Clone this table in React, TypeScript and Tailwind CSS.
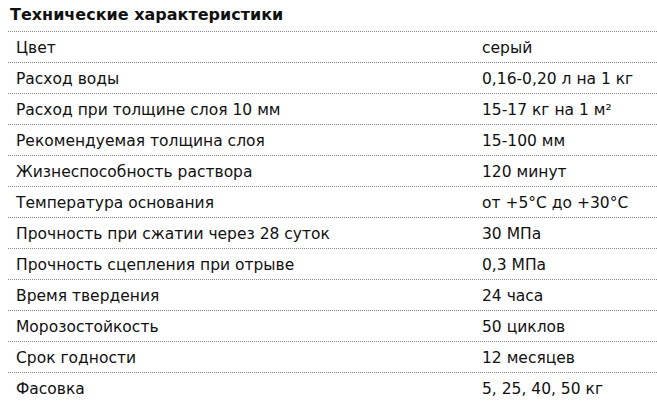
const rows: [string, string][] = [
  ["Цвет", "серый"],
  ["Расход воды", "0,16-0,20 л на 1 кг"],
  ["Расход при толщине слоя 10 мм", "15-17 кг на 1 м²"],
  ["Рекомендуемая толщина слоя", "15-100 мм"],
  ["Жизнеспособность раствора", "120 минут"],
  ["Температура основания", "от +5°С до +30°С"],
  ["Прочность при сжатии через 28 суток", "30 МПа"],
  ["Прочность сцепления при отрыве", "0,3 МПа"],
  ["Время твердения", "24 часа"],
  ["Морозостойкость", "50 циклов"],
  ["Срок годности", "12 месяцев"],
  ["Фасовка", "5, 25, 40, 50 кг"],
];

export default function App() {
  return (
    <div className="w-[657px] h-[412px] overflow-hidden bg-white pl-2 text-[#111] font-['DejaVu_Sans',Verdana,sans-serif]">
      <h2 className="h-[32px] pl-[2px] pt-[5px] text-[16px] font-bold leading-[20px] border-b border-dotted border-[#888]">
        Технические характеристики
      </h2>
      {rows.map(([name, value], i) => (
        <div
          key={i}
          className={`flex h-[31px] items-center pt-[3px] text-[15.5px] ${i < rows.length - 1 ? "border-b border-dotted border-[#888]" : ""}`}
        >
          <div className="w-[474px] pl-2">{name}</div>
          <div className="flex-1">{value}</div>
        </div>
      ))}
    </div>
  );
}
